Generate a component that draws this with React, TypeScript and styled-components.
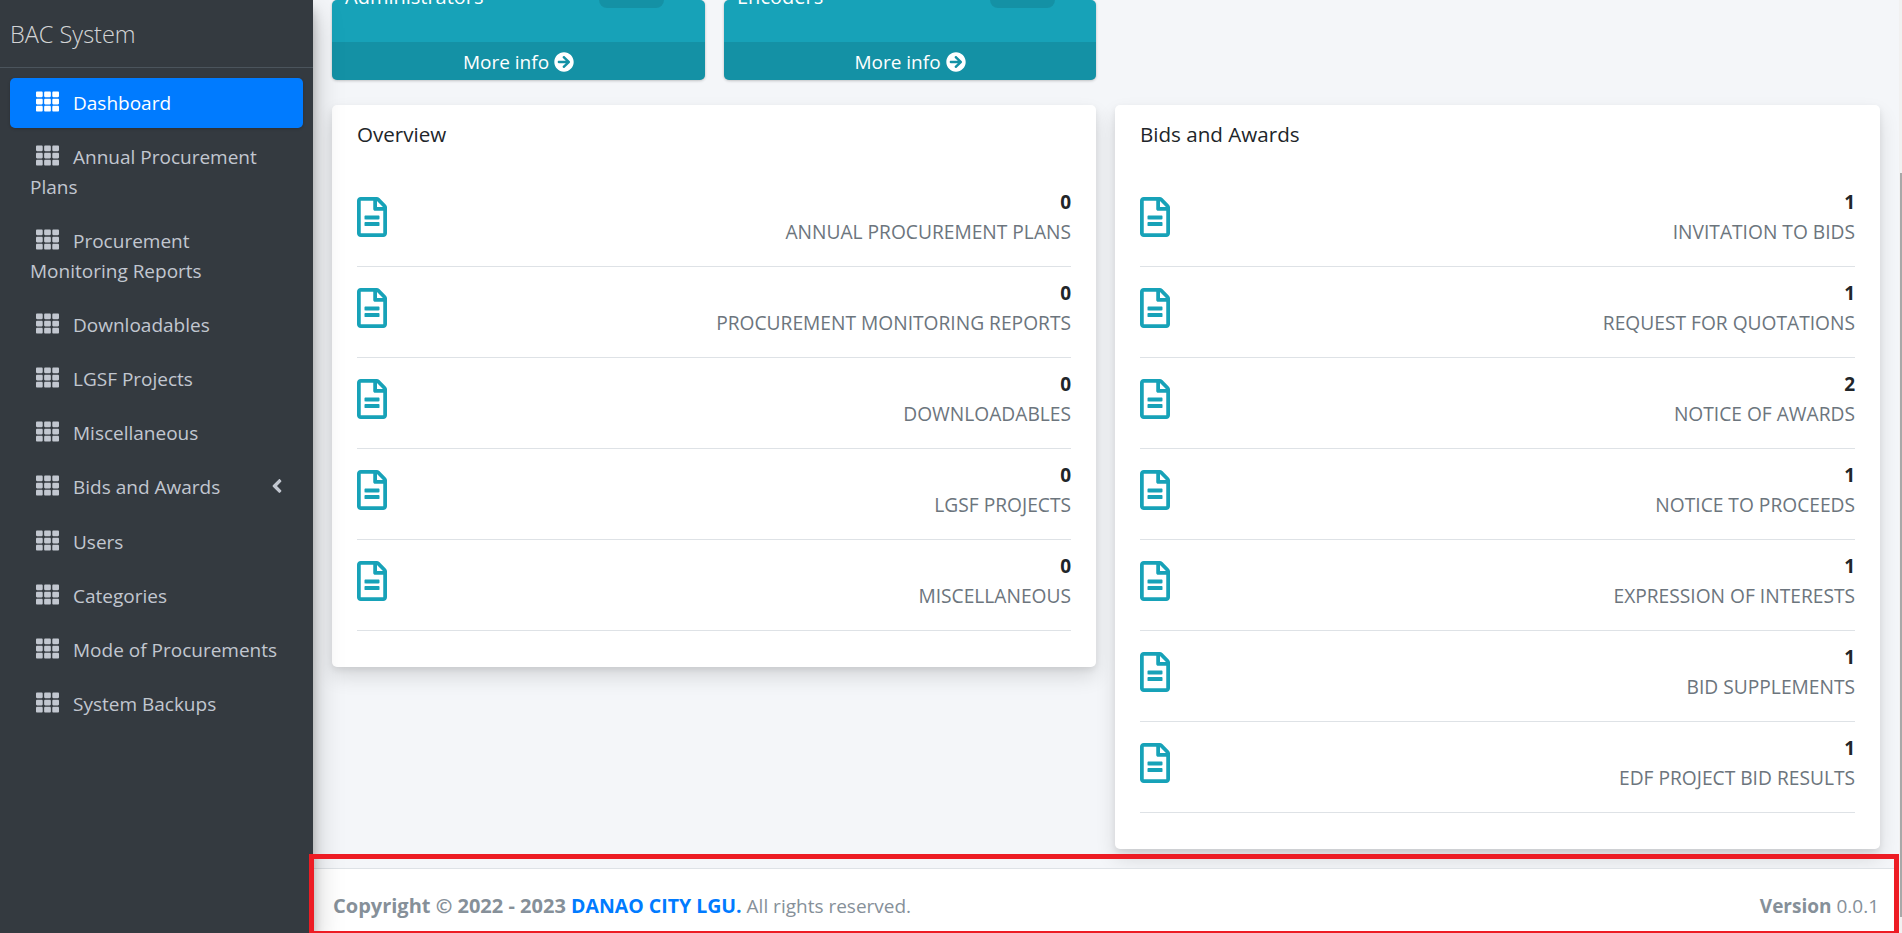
import React, { FC } from 'react'
import styled, { createGlobalStyle } from 'styled-components'
import { FaAngleLeft, FaArrowCircleRight, FaRegFileAlt, FaTh } from 'react-icons/fa'

const GlobalStyle = createGlobalStyle`
  html, body, #root {
    margin: 0;
    height: 100%;
  }
  body {
    font-family: "Open Sans", "Liberation Sans", sans-serif;
    font-size: 19px;
    line-height: 30px;
    color: #212529;
    overflow: hidden;
  }
  * {
    box-sizing: border-box;
  }
`

const Page = styled.div`
  display: flex;
  height: 933px;
  overflow: hidden;
  background-color: #f4f6f9;
`

const Sidebar = styled.aside`
  position: relative;
  z-index: 3;
  flex: 0 0 313px;
  background-color: #343a40;
  box-shadow: 0 14px 28px rgba(0, 0, 0, 0.25), 0 10px 10px rgba(0, 0, 0, 0.22);
`

const Brand = styled.div`
  height: 68px;
  padding: 19px 10px 0;
  border-bottom: 1px solid #4b545c;
  font-size: 23.5px;
  font-weight: 300;
  color: rgba(255, 255, 255, 0.8);
`

const NavList = styled.nav`
  display: flex;
  flex-direction: column;
  gap: 4px;
  padding: 10px 10px 0;
`

const NavLink = styled.a<{ $active?: boolean }>`
  display: block;
  padding: 10px 20px;
  border-radius: 5px;
  color: ${({ $active }) => ($active ? '#fff' : '#c2c7d0')};
  background-color: ${({ $active }) => ($active ? '#007bff' : 'transparent')};
  box-shadow: ${({ $active }) => ($active ? '0 1px 3px rgba(0, 0, 0, 0.2)' : 'none')};

  > svg:first-child {
    margin: 0 14px 0 6px;
    vertical-align: -3px;
  }
`

const Caret = styled.span`
  float: right;
  margin: 1px -5px 0 0;
  font-size: 22px;
`

const Main = styled.main`
  flex: 1;
  min-width: 0;
  display: flex;
  flex-direction: column;
`

const Content = styled.div`
  flex: 1;
  padding: 0 19px;
`

const BoxRow = styled.section`
  display: grid;
  grid-template-columns: 373px 372px;
  gap: 19px;
  margin-bottom: 25px;
`

const SmallBox = styled.div`
  border-radius: 5px;
  color: #fff;
  background-color: #17a2b8;
  box-shadow: 0 0 1px rgba(0, 0, 0, 0.125), 0 1px 3px rgba(0, 0, 0, 0.2);
  overflow: hidden;
`

const BoxBody = styled.div`
  height: 42px;
  display: flex;
  justify-content: space-between;
  align-items: flex-end;
  padding: 0 41px 0 13px;
`

const BoxLabel = styled.span`
  margin-bottom: 30px;
  font-size: 20px;
`

const BoxBadge = styled.span`
  width: 65px;
  height: 40px;
  margin-bottom: 34px;
  border-radius: 8px;
  background-color: rgba(0, 0, 0, 0.1);
`

const BoxFooter = styled.a`
  height: 38px;
  display: flex;
  align-items: center;
  justify-content: center;
  gap: 5px;
  padding-top: 1px;
  background-color: rgba(0, 0, 0, 0.1);
`

const CardRow = styled.section`
  display: grid;
  grid-template-columns: 764px 765px;
  gap: 19px;
  align-items: start;
`

const Card = styled.div`
  padding: 13px 25px 36px;
  border-radius: 5px;
  background-color: #fff;
  box-shadow: 0 10px 20px rgba(0, 0, 0, 0.12), 0 3px 6px rgba(0, 0, 0, 0.08);
`

const CardTitle = styled.h3`
  margin: 0 0 25px;
  font-size: 20.6px;
  font-weight: 400;
  line-height: 33px;
`

const StatRow = styled.div`
  height: 91px;
  display: flex;
  justify-content: space-between;
  padding-top: 11px;
  border-bottom: 1px solid #dee2e6;
  color: #17a2b8;
`

const StatIcon = styled(FaRegFileAlt)`
  width: 30px;
  height: 40px;
  margin-top: 10px;
`

const StatText = styled.div`
  text-align: right;
`

const StatCount = styled.div`
  font-weight: 700;
  color: #212529;
`

const StatLabel = styled.div`
  font-size: 19.2px;
  color: #6c757d;
  text-transform: uppercase;
`

const Footer = styled.footer`
  position: relative;
  height: 65px;
  display: flex;
  justify-content: space-between;
  align-items: center;
  padding: 10px 20px 0;
  border-top: 1px solid #dee2e6;
  background-color: #fff;
  color: #869099;
  font-size: 19px;
`

const Copyright = styled.strong`
  font-size: 20px;
`

const FooterLink = styled.a`
  font-size: 19.5px;
  font-weight: 700;
  color: #007bff;
`

const RedFrame = styled.div`
  position: absolute;
  z-index: 4;
  top: -15px;
  left: -4px;
  right: 0;
  bottom: -3px;
  border: 5px solid #ed1c24;
  pointer-events: none;
`

const ScrollTrack = styled.div`
  flex: 0 0 3px;
  padding-top: 173px;
  background-color: #f1f1f1;
`

const ScrollThumb = styled.div`
  height: 744px;
  margin-left: 1px;
  background-color: #a8a8a8;
`

type NavItem = {
  label: string
  active?: boolean
  caret?: boolean
}

const navItems: NavItem[] = [
  { label: 'Dashboard', active: true },
  { label: 'Annual Procurement Plans' },
  { label: 'Procurement Monitoring Reports' },
  { label: 'Downloadables' },
  { label: 'LGSF Projects' },
  { label: 'Miscellaneous' },
  { label: 'Bids and Awards', caret: true },
  { label: 'Users' },
  { label: 'Categories' },
  { label: 'Mode of Procurements' },
  { label: 'System Backups' },
]

type Stat = {
  count: number
  label: string
}

const overviewStats: Stat[] = [
  { count: 0, label: 'Annual Procurement Plans' },
  { count: 0, label: 'Procurement Monitoring Reports' },
  { count: 0, label: 'Downloadables' },
  { count: 0, label: 'LGSF Projects' },
  { count: 0, label: 'Miscellaneous' },
]

const bidStats: Stat[] = [
  { count: 1, label: 'Invitation to Bids' },
  { count: 1, label: 'Request for Quotations' },
  { count: 2, label: 'Notice of Awards' },
  { count: 1, label: 'Notice to Proceeds' },
  { count: 1, label: 'Expression of Interests' },
  { count: 1, label: 'Bid Supplements' },
  { count: 1, label: 'EDF Project Bid Results' },
]

const InfoBox: FC<{ label: string }> = ({ label }) => (
  <SmallBox>
    <BoxBody>
      <BoxLabel>{label}</BoxLabel>
      <BoxBadge />
    </BoxBody>
    <BoxFooter>
      More info <FaArrowCircleRight size={20} />
    </BoxFooter>
  </SmallBox>
)

const StatCard: FC<{ title: string; stats: Stat[] }> = ({ title, stats }) => (
  <Card>
    <CardTitle>{title}</CardTitle>
    {stats.map((stat) => (
      <StatRow key={stat.label}>
        <StatIcon />
        <StatText>
          <StatCount>{stat.count}</StatCount>
          <StatLabel>{stat.label}</StatLabel>
        </StatText>
      </StatRow>
    ))}
  </Card>
)

export default function App() {
  return (
    <Page>
      <GlobalStyle />
      <Sidebar>
        <Brand>BAC System</Brand>
        <NavList>
          {navItems.map((item) => (
            <NavLink key={item.label} $active={item.active}>
              <FaTh size={23} />
              {item.caret && (
                <Caret>
                  <FaAngleLeft />
                </Caret>
              )}
              {item.label}
            </NavLink>
          ))}
        </NavList>
      </Sidebar>
      <Main>
        <Content>
          <BoxRow>
            <InfoBox label="Administrators" />
            <InfoBox label="Encoders" />
          </BoxRow>
          <CardRow>
            <StatCard title="Overview" stats={overviewStats} />
            <StatCard title="Bids and Awards" stats={bidStats} />
          </CardRow>
        </Content>
        <Footer>
          <span>
            <Copyright>Copyright © 2022 - 2023 </Copyright>
            <FooterLink>DANAO CITY LGU.</FooterLink> All rights reserved.
          </span>
          <span>
            <strong>Version</strong> 0.0.1
          </span>
          <RedFrame />
        </Footer>
      </Main>
      <ScrollTrack>
        <ScrollThumb />
      </ScrollTrack>
    </Page>
  )
}
